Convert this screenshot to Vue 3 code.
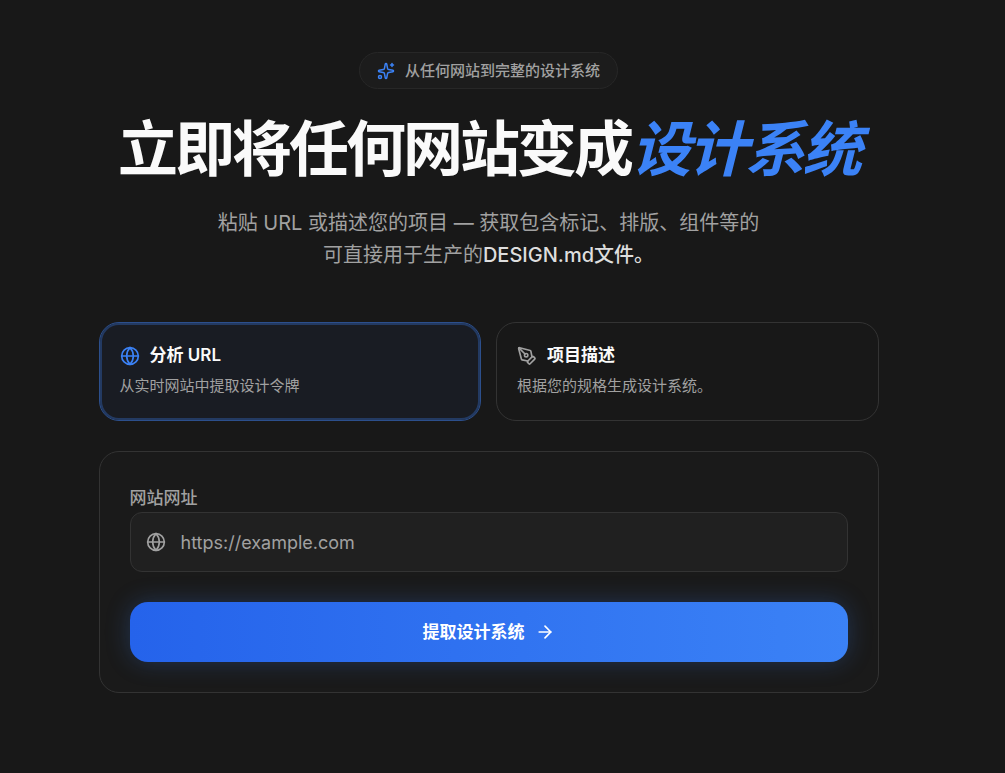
<script setup>
import { ref } from 'vue'

const mode = ref('url')
const url = ref('')
</script>

<template>
  <main class="page">
    <div class="content">
      <p class="pill">
        <svg class="icon pill-icon" viewBox="0 0 24 24" aria-hidden="true">
          <path d="M11.017 2.814a1 1 0 0 1 1.966 0l1.051 5.558a2 2 0 0 0 1.594 1.594l5.558 1.051a1 1 0 0 1 0 1.966l-5.558 1.051a2 2 0 0 0-1.594 1.594l-1.051 5.558a1 1 0 0 1-1.966 0l-1.051-5.558a2 2 0 0 0-1.594-1.594l-5.558-1.051a1 1 0 0 1 0-1.966l5.558-1.051a2 2 0 0 0 1.594-1.594z" />
          <path d="M20 2v4" />
          <path d="M22 4h-4" />
          <circle cx="4" cy="20" r="2" />
        </svg>
        <span>从任何网站到完整的设计系统</span>
      </p>

      <h1 class="title">立即将任何网站变成<em>设计系统</em></h1>

      <p class="lead">
        粘贴 URL 或描述您的项目 — 获取包含标记、排版、组件等的<br />可直接用于生产的<strong>DESIGN.md文件。</strong>
      </p>

      <div class="modes">
        <button type="button" class="mode" :class="{ active: mode === 'url' }" :aria-pressed="mode === 'url'" @click="mode = 'url'">
          <span class="mode-head">
            <svg class="icon" viewBox="0 0 24 24" aria-hidden="true">
              <circle cx="12" cy="12" r="10" />
              <path d="M12 2a14.5 14.5 0 0 0 0 20 14.5 14.5 0 0 0 0-20" />
              <path d="M2 12h20" />
            </svg>
            <span>分析 URL</span>
          </span>
          <span class="mode-text">从实时网站中提取设计令牌</span>
        </button>
        <button type="button" class="mode" :class="{ active: mode === 'brief' }" :aria-pressed="mode === 'brief'" @click="mode = 'brief'">
          <span class="mode-head">
            <svg class="icon" viewBox="0 0 24 24" aria-hidden="true">
              <path d="M15.707 21.293a1 1 0 0 1-1.414 0l-1.586-1.586a1 1 0 0 1 0-1.414l5.586-5.586a1 1 0 0 1 1.414 0l1.586 1.586a1 1 0 0 1 0 1.414z" />
              <path d="m18 13-1.375-6.874a1 1 0 0 0-.746-.776L3.235 2.028a1 1 0 0 0-1.207 1.207L5.35 15.879a1 1 0 0 0 .776.746L13 18" />
              <path d="m2.3 2.3 7.286 7.286" />
              <circle cx="11" cy="11" r="2" />
            </svg>
            <span>项目描述</span>
          </span>
          <span class="mode-text">根据您的规格生成设计系统。</span>
        </button>
      </div>

      <form class="panel" @submit.prevent>
        <label class="label" for="site-url">网站网址</label>
        <div class="field">
          <svg class="icon" viewBox="0 0 24 24" aria-hidden="true">
            <circle cx="12" cy="12" r="10" />
            <path d="M12 2a14.5 14.5 0 0 0 0 20 14.5 14.5 0 0 0 0-20" />
            <path d="M2 12h20" />
          </svg>
          <input id="site-url" v-model="url" type="url" placeholder="https://example.com" />
        </div>
        <button type="submit" class="submit">
          <span>提取设计系统</span>
          <svg class="icon" viewBox="0 0 24 24" aria-hidden="true">
            <path d="M5 12h14" />
            <path d="m12 5 7 7-7 7" />
          </svg>
        </button>
      </form>
    </div>
  </main>
</template>

<style>
body {
  background: #181818;
}
</style>

<style scoped>
.page {
  box-sizing: border-box;
  min-height: 100vh;
  padding: 52px 28px 80px 0;
  background: #181818;
  color: #fafafa;
  font-family: Inter, "Noto Sans CJK SC", sans-serif;
}

.content {
  display: flex;
  flex-direction: column;
  align-items: center;
  max-width: 780px;
  margin: 0 auto;
}

.icon {
  flex: none;
  width: 20px;
  height: 20px;
  fill: none;
  stroke: currentColor;
  stroke-width: 2;
  stroke-linecap: round;
  stroke-linejoin: round;
}

.pill {
  display: flex;
  align-items: center;
  gap: 10px;
  margin: 0;
  padding: 7px 17px;
  border: 1px solid #272727;
  border-radius: 20px;
  background: #1c1c1c;
  color: #a1a1a1;
  font-size: 15px;
  font-weight: 500;
  line-height: 21px;
}

.pill-icon {
  width: 18px;
  height: 18px;
  color: #3b82f6;
}

.title {
  margin: 30px 0 0;
  font-size: 60px;
  font-weight: 700;
  line-height: 60px;
  letter-spacing: -3px;
  text-align: center;
}

.title em {
  color: #3b82f6;
}

.lead {
  margin: 28px 0 0;
  color: #a1a1a1;
  font-size: 20px;
  line-height: 32px;
  text-align: center;
}

.lead strong {
  color: #dedede;
  font-weight: 500;
}

.modes {
  display: grid;
  grid-template-columns: 1fr 1fr;
  gap: 15px;
  width: 100%;
  margin-top: 51px;
}

.mode {
  display: flex;
  flex-direction: column;
  gap: 6px;
  padding: 20px;
  border: 1px solid #333;
  border-radius: 20px;
  background: transparent;
  color: #a1a1a1;
  font-family: inherit;
  text-align: left;
  cursor: pointer;
}

.mode.active {
  border-color: #2c4f8c;
  background: #191c23;
  box-shadow: inset 0 0 0 2px #233a62;
}

.mode-head {
  display: flex;
  align-items: center;
  gap: 10px;
  font-size: 17px;
  font-weight: 600;
  line-height: 25px;
}

.mode-head span {
  color: #fafafa;
}

.mode.active .icon {
  color: #3b82f6;
}

.mode-text {
  padding-bottom: 2px;
  font-size: 15px;
  line-height: 24px;
}

.panel {
  box-sizing: border-box;
  display: flex;
  flex-direction: column;
  width: 100%;
  margin-top: 30px;
  padding: 32px 30px 30px;
  border: 1px solid #333;
  border-radius: 20px;
  background: #1a1a1a;
}

.label {
  color: #a1a1a1;
  font-size: 17px;
  font-weight: 500;
  line-height: 28px;
}

.field {
  display: flex;
  align-items: center;
  gap: 15px;
  padding: 0 15px;
  border: 1px solid #333;
  border-radius: 12px;
  background: #202020;
  color: #a1a1a1;
}

.field input {
  flex: 1;
  min-width: 0;
  height: 58px;
  padding: 0;
  border: 0;
  outline: 0;
  background: transparent;
  color: #fafafa;
  font-family: inherit;
  font-size: 18px;
}

.field input::placeholder {
  color: #a1a1a1;
  opacity: 1;
}

.submit {
  display: flex;
  align-items: center;
  justify-content: center;
  gap: 10px;
  height: 60px;
  margin-top: 30px;
  border: 0;
  border-radius: 18px;
  background: linear-gradient(90deg, #2563eb, #3b82f6);
  box-shadow: 0 0 25px rgba(59, 130, 246, 0.25);
  color: #fff;
  font-family: inherit;
  font-size: 17px;
  font-weight: 700;
  line-height: 25px;
  cursor: pointer;
}
</style>
